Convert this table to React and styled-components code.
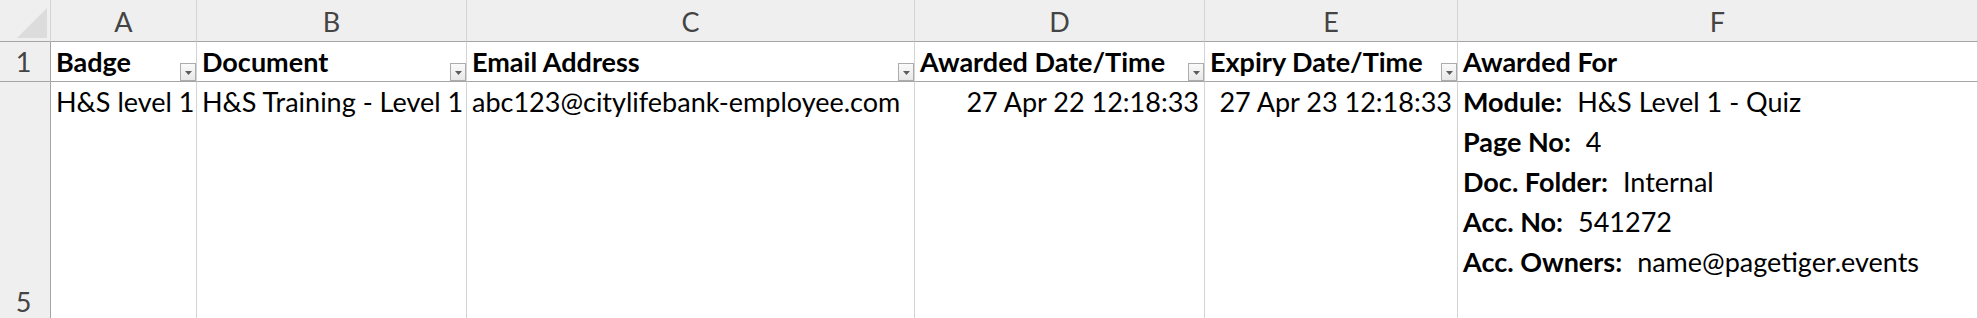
import styled, { createGlobalStyle } from "styled-components";

const GlobalStyle = createGlobalStyle`
  html, body {
    margin: 0;
    padding: 0;
    background: #fff;
    overflow: hidden;
  }
`;

const Sheet = styled.div`
  display: grid;
  grid-template-columns: 51px 146px 270px 448px 290px 253px 1fr;
  grid-template-rows: 42px 40px 240px;
  width: 1978px;
  font-family: Lato, "Noto Sans", sans-serif;
  font-size: 27px;
  color: #000;
`;

const Corner = styled.div`
  background: #efefef;
  border-right: 1px solid #d4d4d4;
  border-bottom: 1px solid #a5a5a5;
  display: flex;
  align-items: flex-end;
  justify-content: flex-end;
  padding: 0 3px 3px 0;
  box-sizing: border-box;
`;

const ColHead = styled.div`
  background: #efefef;
  border-right: 1px solid #d4d4d4;
  border-bottom: 1px solid #a5a5a5;
  color: #444;
  text-align: center;
  line-height: 41px;
  padding-top: 1px;
  box-sizing: border-box;
`;

const RowHead = styled.div`
  background: #efefef;
  border-right: 1px solid #a5a5a5;
  border-bottom: 1px solid ${(p) => (p.$first ? "#a5a5a5" : "#d4d4d4")};
  color: #444;
  text-align: center;
  line-height: 39px;
  display: flex;
  align-items: ${(p) => (p.$bottom ? "flex-end" : "center")};
  justify-content: center;
  padding-right: 3px;
  box-sizing: border-box;
`;

const HeadCell = styled.div`
  position: relative;
  border-right: 1px solid #d4d4d4;
  border-bottom: 1px solid #a5a5a5;
  font-weight: 700;
  line-height: 39px;
  padding: 0 5px;
  white-space: nowrap;
  box-sizing: border-box;
`;

const FilterButton = styled.div`
  position: absolute;
  right: 0;
  bottom: 0;
  width: 16px;
  height: 18px;
  box-sizing: border-box;
  border: 1px solid #acacac;
  background: linear-gradient(#fafafa, #e8e8e8);
  display: flex;
  align-items: center;
  justify-content: center;
  padding-top: 2px;
`;

const Cell = styled.div`
  border-right: 1px solid #d4d4d4;
  line-height: 40px;
  padding: 0 5px;
  white-space: nowrap;
  overflow: hidden;
  text-align: ${(p) => (p.$right ? "right" : "left")};
  box-sizing: border-box;
`;

const Detail = styled.div`
  display: flex;
  gap: 15px;
`;

const Label = styled.span`
  font-weight: 700;
`;

const columns = ["A", "B", "C", "D", "E", "F"];

const headers = [
  { title: "Badge", filter: true },
  { title: "Document", filter: true },
  { title: "Email Address", filter: true },
  { title: "Awarded Date/Time", filter: true },
  { title: "Expiry Date/Time", filter: true },
  { title: "Awarded For", filter: false },
];

const details = [
  ["Module:", "H&S Level 1 - Quiz"],
  ["Page No:", "4"],
  ["Doc. Folder:", "Internal"],
  ["Acc. No:", "541272"],
  ["Acc. Owners:", "name@pagetiger.events"],
];

function Arrow() {
  return (
    <svg width="7" height="4" viewBox="0 0 7 4">
      <path d="M0 0h7L3.5 4z" fill="#5c5c5c" />
    </svg>
  );
}

export default function App() {
  return (
    <>
      <GlobalStyle />
      <Sheet>
        <Corner>
          <svg width="30" height="30" viewBox="0 0 30 30">
            <path d="M30 0V30H0z" fill="#dcdcdc" />
          </svg>
        </Corner>
        {columns.map((c) => (
          <ColHead key={c}>{c}</ColHead>
        ))}

        <RowHead $first>1</RowHead>
        {headers.map((h) => (
          <HeadCell key={h.title}>
            {h.title}
            {h.filter && (
              <FilterButton>
                <Arrow />
              </FilterButton>
            )}
          </HeadCell>
        ))}

        <RowHead $bottom>5</RowHead>
        <Cell>H&amp;S level 1</Cell>
        <Cell>H&amp;S Training - Level 1</Cell>
        <Cell>abc123@citylifebank-employee.com</Cell>
        <Cell $right>27 Apr 22 12:18:33</Cell>
        <Cell $right>27 Apr 23 12:18:33</Cell>
        <Cell>
          {details.map(([k, v]) => (
            <Detail key={k}>
              <Label>{k}</Label>
              <span>{v}</span>
            </Detail>
          ))}
        </Cell>
      </Sheet>
    </>
  );
}
